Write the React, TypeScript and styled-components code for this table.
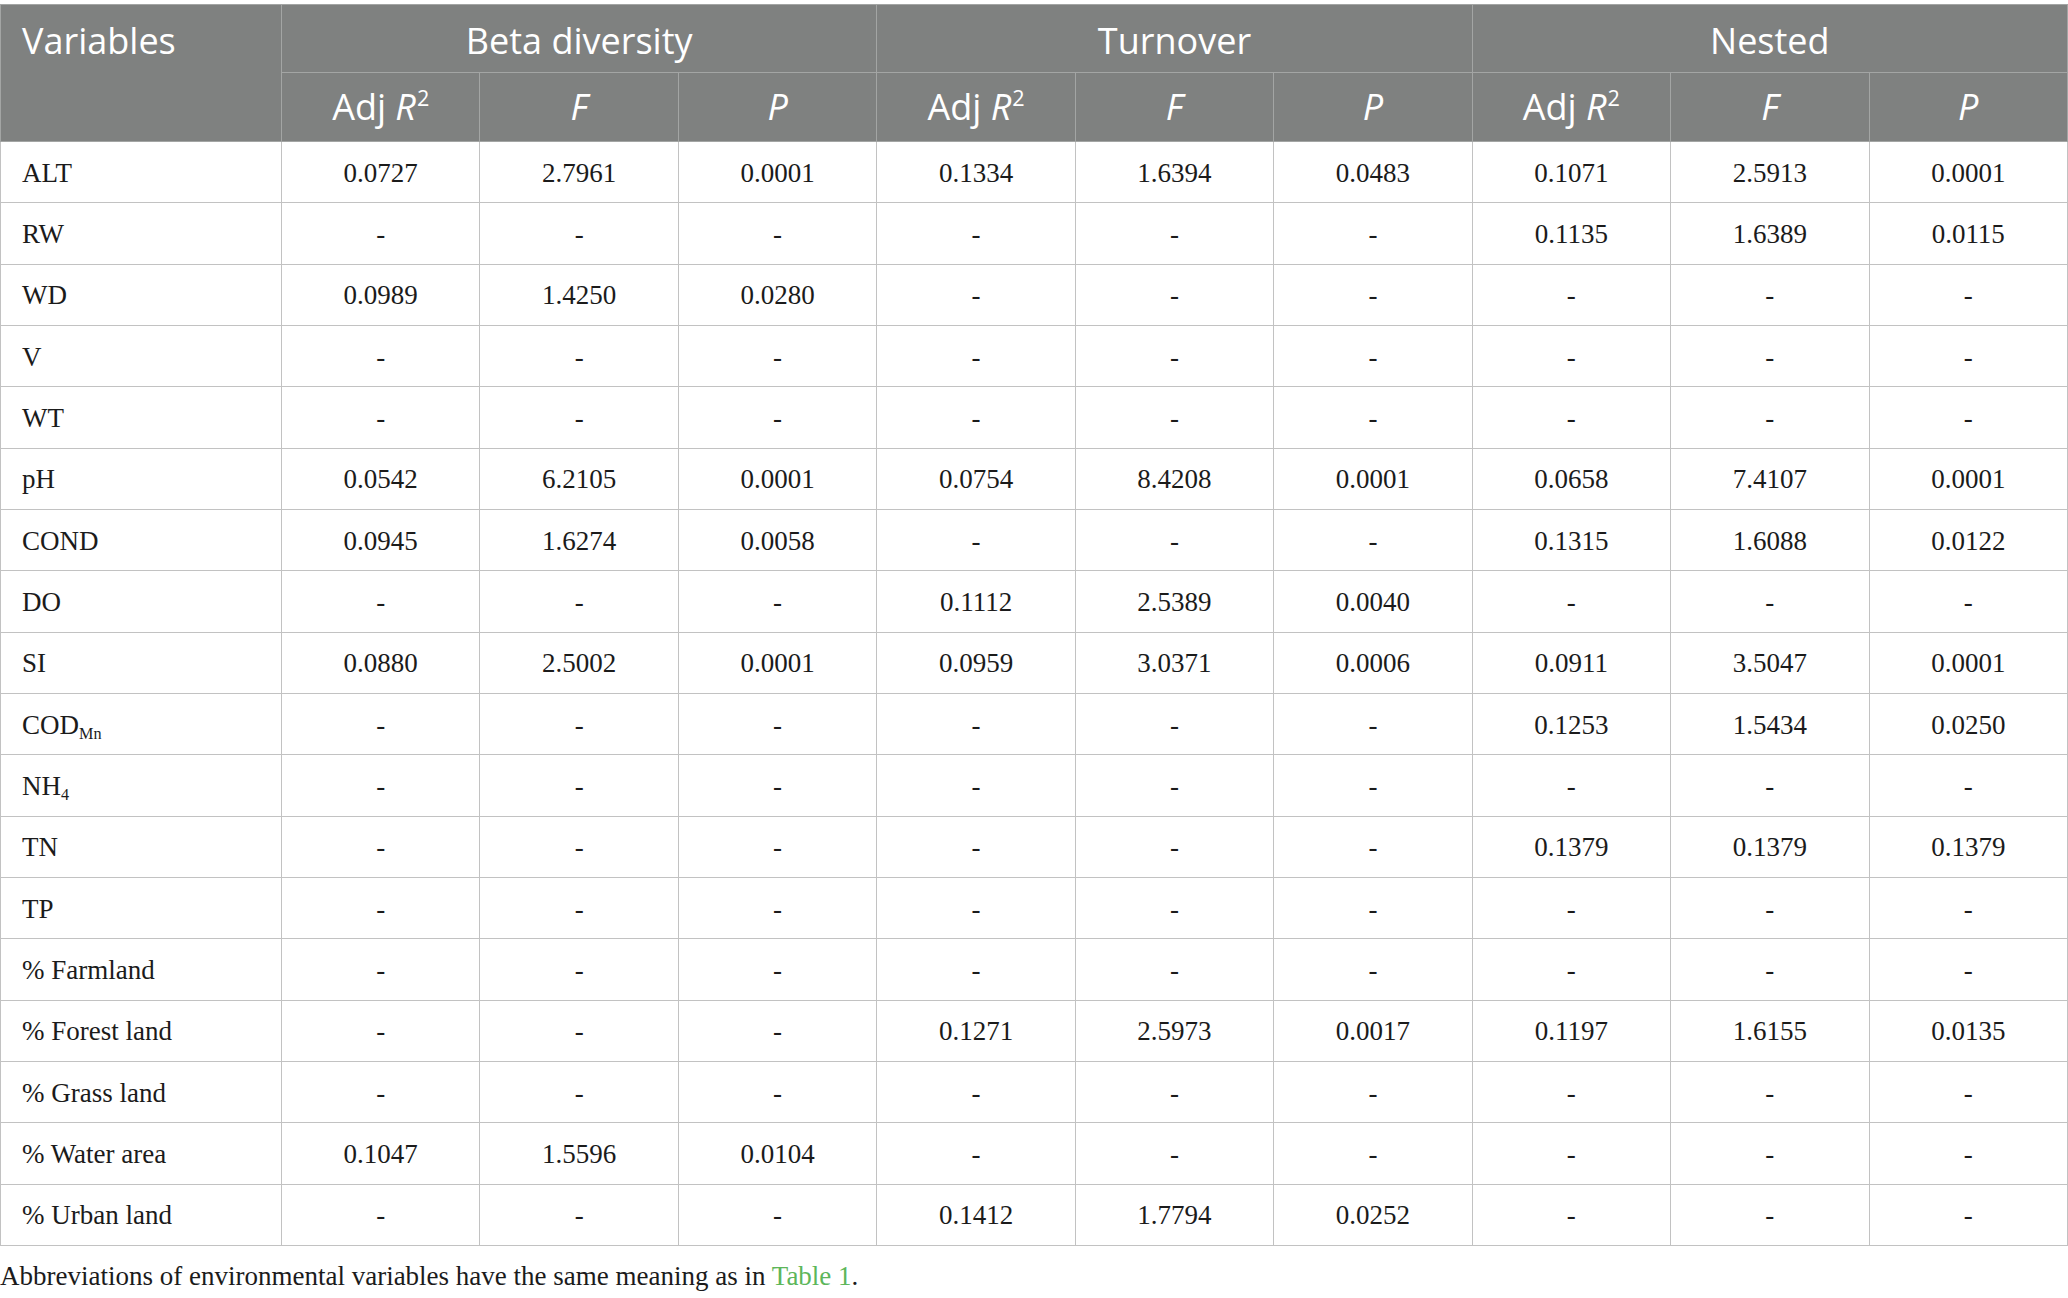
import React from "react";
import styled, { createGlobalStyle } from "styled-components";

const GlobalStyle = createGlobalStyle`
  html, body {
    margin: 0;
    padding: 0;
    background: #ffffff;
  }
`;

const Page = styled.div`
  width: 2068px;
  padding-top: 4px;
`;

const Table = styled.table`
  width: 2068px;
  border-collapse: collapse;
  table-layout: fixed;
  border: 1px solid #bdbdbd;
`;

const HeadRow = styled.tr<{ $h: number }>`
  height: ${(p) => p.$h}px;
  background: #7f8180;
`;

const HeadCell = styled.th<{ $left?: boolean; $top?: number }>`
  font-family: "Open Sans", "Noto Sans", sans-serif;
  font-weight: 400;
  font-size: 36px;
  color: #ffffff;
  text-align: ${(p) => (p.$left ? "left" : "center")};
  vertical-align: ${(p) => (p.$left ? "top" : "middle")};
  padding: ${(p) => (p.$left ? "13px 0 0 21px" : `${p.$top ?? 0}px 0 0 0`)};
  border: 1px solid #a3a5a4;
  line-height: 1.3;
  white-space: nowrap;
`;

const Italic = styled.i`
  font-style: italic;
`;

const Sup = styled.sup`
  font-size: 0.6em;
  vertical-align: 0.62em;
  line-height: 0;
  margin-left: 1px;
`;

const Row = styled.tr`
  height: 61.33px;
`;

const Cell = styled.td<{ $first?: boolean }>`
  font-family: "Liberation Serif", "Times New Roman", serif;
  font-size: 27px;
  color: #1b1b1b;
  text-align: ${(p) => (p.$first ? "left" : "center")};
  padding: ${(p) => (p.$first ? "2px 0 0 21px" : "2px 0 0 0")};
  vertical-align: middle;
  border: 1px solid #c2c2c2;
  white-space: nowrap;
`;

const Sub = styled.sub`
  font-size: 0.6em;
  vertical-align: -0.3em;
  line-height: 0;
`;

const Caption = styled.p`
  margin: 12px 0 0 0;
  font-family: "Liberation Serif", "Times New Roman", serif;
  font-size: 27px;
  line-height: 36px;
  color: #1b1b1b;
`;

const TableLink = styled.span`
  color: #5db65a;
`;

type RowData = { label: React.ReactNode; values: string[] };

const dash = ["-", "-", "-", "-", "-", "-", "-", "-", "-"];

const rows: RowData[] = [
  { label: "ALT", values: ["0.0727", "2.7961", "0.0001", "0.1334", "1.6394", "0.0483", "0.1071", "2.5913", "0.0001"] },
  { label: "RW", values: ["-", "-", "-", "-", "-", "-", "0.1135", "1.6389", "0.0115"] },
  { label: "WD", values: ["0.0989", "1.4250", "0.0280", "-", "-", "-", "-", "-", "-"] },
  { label: "V", values: dash },
  { label: "WT", values: dash },
  { label: "pH", values: ["0.0542", "6.2105", "0.0001", "0.0754", "8.4208", "0.0001", "0.0658", "7.4107", "0.0001"] },
  { label: "COND", values: ["0.0945", "1.6274", "0.0058", "-", "-", "-", "0.1315", "1.6088", "0.0122"] },
  { label: "DO", values: ["-", "-", "-", "0.1112", "2.5389", "0.0040", "-", "-", "-"] },
  { label: "SI", values: ["0.0880", "2.5002", "0.0001", "0.0959", "3.0371", "0.0006", "0.0911", "3.5047", "0.0001"] },
  { label: <>COD<Sub>Mn</Sub></>, values: ["-", "-", "-", "-", "-", "-", "0.1253", "1.5434", "0.0250"] },
  { label: <>NH<Sub>4</Sub></>, values: dash },
  { label: "TN", values: ["-", "-", "-", "-", "-", "-", "0.1379", "0.1379", "0.1379"] },
  { label: "TP", values: dash },
  { label: "% Farmland", values: dash },
  { label: "% Forest land", values: ["-", "-", "-", "0.1271", "2.5973", "0.0017", "0.1197", "1.6155", "0.0135"] },
  { label: "% Grass land", values: dash },
  { label: "% Water area", values: ["0.1047", "1.5596", "0.0104", "-", "-", "-", "-", "-", "-"] },
  { label: "% Urban land", values: ["-", "-", "-", "0.1412", "1.7794", "0.0252", "-", "-", "-"] },
];

const groups = ["Beta diversity", "Turnover", "Nested"];

function StatHeads() {
  return (
    <>
      <HeadCell>
        Adj <Italic>R</Italic>
        <Sup>2</Sup>
      </HeadCell>
      <HeadCell>
        <Italic>F</Italic>
      </HeadCell>
      <HeadCell>
        <Italic>P</Italic>
      </HeadCell>
    </>
  );
}

export default function App() {
  return (
    <Page>
      <GlobalStyle />
      <Table>
        <colgroup>
          <col style={{ width: 281 }} />
          {Array.from({ length: 9 }).map((_, i) => (
            <col key={i} />
          ))}
        </colgroup>
        <thead>
          <HeadRow $h={68}>
            <HeadCell $left rowSpan={2}>
              Variables
            </HeadCell>
            {groups.map((g) => (
              <HeadCell key={g} colSpan={3} $top={5}>
                {g}
              </HeadCell>
            ))}
          </HeadRow>
          <HeadRow $h={69}>
            {groups.map((g) => (
              <StatHeads key={g} />
            ))}
          </HeadRow>
        </thead>
        <tbody>
          {rows.map((r, i) => (
            <Row key={i}>
              <Cell $first>{r.label}</Cell>
              {r.values.map((v, j) => (
                <Cell key={j}>{v}</Cell>
              ))}
            </Row>
          ))}
        </tbody>
      </Table>
      <Caption>
        Abbreviations of environmental variables have the same meaning as in{" "}
        <TableLink>Table 1</TableLink>.
      </Caption>
    </Page>
  );
}
